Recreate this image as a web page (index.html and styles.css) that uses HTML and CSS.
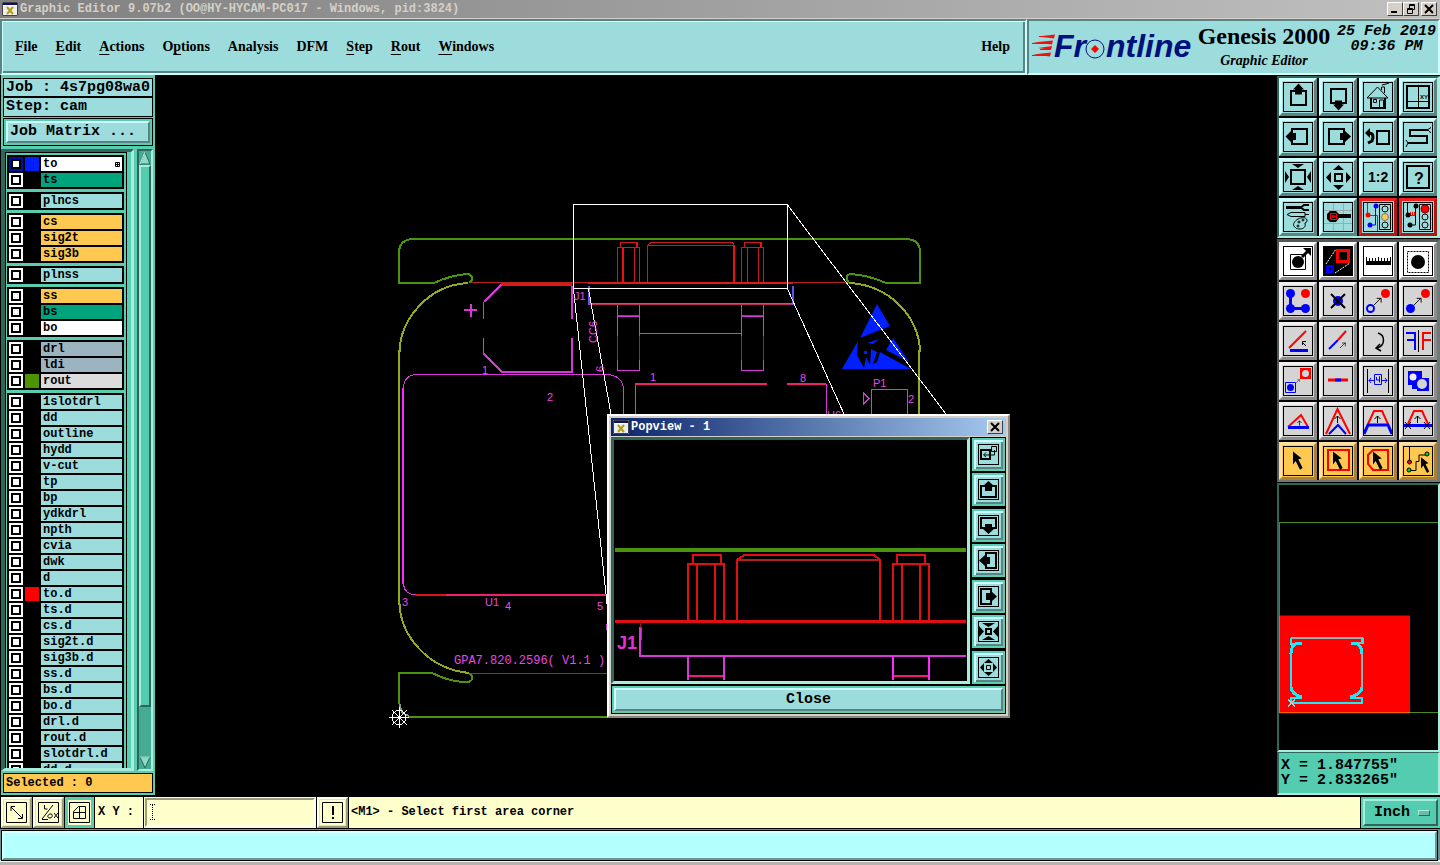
FILE: index.html
```
<!DOCTYPE html>
<html lang="en">
<head>
<meta charset="utf-8">
<title>Graphic Editor 9.07b2</title>
<link rel="stylesheet" href="styles.css">
</head>
<body>
<svg class="defs" aria-hidden="true">
<symbol id="xwin" viewBox="0 0 16 14"><path fill="#fff" d="M0 0h16v14H0z"/><path fill="#10106a" d="M1 1h14v2H1z"/><path fill="#eee" d="M1 4h14v9H1z"/><path stroke="#444" fill="none" d="M.5 .5h15v13H.5z"/><path stroke="#b0a010" stroke-width="2" d="M5 5l6 7M11 5l-6 7"/></symbol>
<symbol id="up" viewBox="1 1 28 28"><path class="k2" d="M8 9h15v14H8z"/><path d="M10 7.500l5.500-6 5.500 6-2 0v5h-7v-5z"/></symbol>
<symbol id="down" viewBox="1 1 28 28"><path class="k2" d="M8 7h15v14H8z"/><path d="M10 22.500l5.500 6 5.500-6-2 0v-4h-7v4z"/></symbol>
<symbol id="left" viewBox="1 1 28 28"><path class="k2" d="M9 7h15v15H9z"/><path d="M8 9l-5.500 5.500 5.500 5.500v-2h5v-7h-5z"/></symbol>
<symbol id="right" viewBox="1 1 28 28"><path class="k2" d="M6 7h15v15H6z"/><path d="M22 9l6 5.500-6 5.500v-2h-5v-7h5z"/></symbol>
<symbol id="in" viewBox="1 1 28 28"><path class="k2" d="M8 8h14v14H8z"/><path d="M9 2h12l-6 4zM9 28h12l-6-4zM2 9v12l4-6zM28 9v12l-4-6z"/></symbol>
<symbol id="out" viewBox="1 1 28 28"><path class="k2" d="M12 12h7v7h-7z"/><path d="M10 8h11l-5.500-5zM10 23h11l-5.500 5zM8 10v11l-5-5.500zM23 10v11l5-5.500z"/></symbol>
<symbol id="home" viewBox="1 1 28 28"><path class="k2" d="M8 16v10h14V16"/><path class="k1" d="M4 16L14.500 5 25 16zM18.500 8V5h3v6M19 3l4-1 3-1M10.500 17.500h3v3h-3zM16.500 26v-8h4v8"/></symbol>
<symbol id="back" viewBox="1 1 28 28"><path class="k2" d="M14 9h12v13H14z"/><path class="k3" d="M6 11c4 0 5 3 3 8l-4 2"/><path d="M2 11l5-5v10z"/></symbol>
<symbol id="serp" viewBox="1 1 28 28"><path class="k2" d="M25 8H7v6h17v7H5"/><path class="k1" d="M25 7.500l3-2M25 8l3 3M5 21l-2-3M5 21l-2 4"/></symbol>
<symbol id="tools" viewBox="1 1 28 28"><path class="k3" d="M3 5.500h16"/><path class="k2" d="M26 3h-5l-3 2.500 3 2.500h5"/><path class="k1" d="M4 12.500l4-2h14v4H8zM22 12.500h4M12 25c-3-1-1-6 3-8s8-2 9 1-3 2-2 4-1 5-5 5-4-1-5-2z"/><circle class="k1" cx="16" cy="20" r="1"/><circle class="k1" cx="20" cy="18" r="1"/><circle class="k1" cx="15" cy="24" r="1"/></symbol>
<symbol id="net" viewBox="1 1 28 28"><path stroke="#9aabab" fill="none" d="M10.500 1v28M20.500 1v28M1 8.500h28M1 21.500h28"/><path d="M7 9h6l3 3h12v4H16l-3 4H7l-3-3v-5z"/><path stroke="#f00" fill="none" d="M7.500 11.500h6v6h-6zM9.500 13.500h2v2h-2z"/></symbol>
<symbol id="light1" viewBox="1 1 28 28"><path stroke="red" fill="none" d="M4.500 1v12.500h10V29"/><path stroke="#00f" fill="none" d="M12.500 4v19H7"/><circle cx="5" cy="13" r="2.500" fill="red"/><circle cx="13" cy="4" r="2.500" fill="#00f"/><circle cx="7" cy="23" r="2.500" fill="#00f"/><path class="k1" d="M16.500 2.500h11v25h-11z"/><circle class="k1" cx="22" cy="7" r="3"/><circle cx="22" cy="15" r="3.500" fill="#ffc850" stroke="#777"/><circle class="k1" cx="22" cy="23" r="3"/></symbol>
<symbol id="light2" viewBox="1 1 28 28"><path class="k1" d="M4.500 1v12.500M12.500 4v19H7"/><path stroke="red" stroke-width="1" fill="none" d="M7 13.500h5M7.500 10v4M9.500 10v4M11.500 10v4"/><circle cx="5" cy="13" r="2.500"/><circle cx="13" cy="4" r="2.500"/><circle cx="7" cy="23" r="2.500"/><path class="k1" d="M16.500 2.500h11v25h-11z"/><circle cx="22" cy="7" r="4" fill="red" stroke="#700"/><circle class="k1" cx="22" cy="15" r="3"/><circle class="k1" cx="22" cy="23" r="3"/></symbol>
<symbol id="arr" viewBox="0 0 16 22"><path d="M0 0l10 8-4 1 5 10-3 2-5-10-3 4z"/></symbol>
<symbol id="mv" viewBox="0 0 9 9"><path stroke="#000" fill="none" d="M0 9l8-8M3 1.500h5v5"/></symbol>
<symbol id="ua" viewBox="0 0 7 8"><path stroke="#000" fill="none" d="M3.500 8V1M.5 4l3-3 3 3"/></symbol>
</svg>

<header class="titlebar">
  <svg class="winicon"><use href="#xwin"/></svg>
  <span class="titletext">Graphic Editor 9.07b2 (OO@HY-HYCAM-PC017 - Windows, pid:3824)</span>
  <button class="wbtn" aria-label="Minimize"><svg viewBox="0 0 12 10"><path d="M2 7h6v2H2z"/></svg></button>
  <button class="wbtn" aria-label="Restore"><svg viewBox="0 0 12 10"><path class="k1" d="M4.500 4V.5h5v5H8M2.500 4.500h5v5h-5zM4 1.500h6M2 5.500h6"/></svg></button>
  <button class="wbtn last" aria-label="Close window"><svg viewBox="0 0 12 10"><path class="kx" d="M2 1l8 8M10 1L2 9"/></svg></button>
</header>

<div class="top">
  <nav class="menubar">
    <button><u>F</u>ile</button><button><u>E</u>dit</button><button><u>A</u>ctions</button><button>O<u>p</u>tions</button><button>Analysis</button><button>DFM</button><button><u>S</u>tep</button><button><u>R</u>out</button><button><u>W</u>indows</button><button class="help">Help</button>
  </nav>
  <div class="brand">
    <svg class="logo" viewBox="1031 30 161 34" role="img" aria-label="Frontline">
      <g fill="#f01010"><path d="M1038 36.500l17-2-1 4zM1033 42.500l20-2-1 4zM1038 48l14-2-1 4zM1033 54.500l18-2-1 4z"/></g>
      <g fill="none" stroke="#f01010"><path d="M1039 36.500h12M1032 43.500h14M1040 49.500h10M1032 55.500h14"/></g>
      <text class="logotext" x="1054" y="57">Fr</text><text class="logotext" x="1106" y="57">ntline</text>
      <circle cx="1095" cy="49" r="9" fill="#9cdcdc" stroke="#00107c"/><path fill="red" d="M1095 45l4 4-4 4-4-4z"/>
    </svg>
    <div class="product"><strong>Genesis 2000</strong><em>Graphic Editor</em></div>
    <div class="date">25 Feb 2019<br>09:36 PM</div>
  </div>
</div>

<main class="main">
  <aside class="side">
    <div class="info job">Job : 4s7pg08wa0</div>
    <div class="info step">Step: cam</div>
    <div class="matrix"><button>Job Matrix ...</button></div>
    <div class="lists">
      <div class="frame"><div class="layers">
        <div class="group">
          <label class="layer active"><input type="checkbox"><i class="blue"></i><span class="white">to<svg class="mark" viewBox="0 0 5 5"><path stroke="#000" stroke-width="1" fill="none" d="M.5 .5h4v4h-4zM2.500 0v5M0 2.500h5"/></svg></span></label>
          <label class="layer"><input type="checkbox"><i></i><span class="green">ts</span></label>
        </div>
        <div class="group"><label class="layer"><input type="checkbox"><i></i><span>plncs</span></label></div>
        <div class="group">
          <label class="layer"><input type="checkbox"><i></i><span class="orange">cs</span></label>
          <label class="layer"><input type="checkbox"><i></i><span class="orange">sig2t</span></label>
          <label class="layer"><input type="checkbox"><i></i><span class="orange">sig3b</span></label>
        </div>
        <div class="group"><label class="layer"><input type="checkbox"><i></i><span>plnss</span></label></div>
        <div class="group">
          <label class="layer"><input type="checkbox"><i></i><span class="orange">ss</span></label>
          <label class="layer"><input type="checkbox"><i></i><span class="green">bs</span></label>
          <label class="layer"><input type="checkbox"><i></i><span class="white">bo</span></label>
        </div>
        <div class="group">
          <label class="layer"><input type="checkbox"><i></i><span class="steel">drl</span></label>
          <label class="layer"><input type="checkbox"><i></i><span class="steel">ldi</span></label>
          <label class="layer"><input type="checkbox"><i class="olive"></i><span class="grey">rout</span></label>
        </div>
        <div class="group">
          <label class="layer"><input type="checkbox"><i></i><span>1slotdrl</span></label>
          <label class="layer"><input type="checkbox"><i></i><span>dd</span></label>
          <label class="layer"><input type="checkbox"><i></i><span>outline</span></label>
          <label class="layer"><input type="checkbox"><i></i><span>hydd</span></label>
          <label class="layer"><input type="checkbox"><i></i><span>v-cut</span></label>
          <label class="layer"><input type="checkbox"><i></i><span>tp</span></label>
          <label class="layer"><input type="checkbox"><i></i><span>bp</span></label>
          <label class="layer"><input type="checkbox"><i></i><span>ydkdrl</span></label>
          <label class="layer"><input type="checkbox"><i></i><span>npth</span></label>
          <label class="layer"><input type="checkbox"><i></i><span>cvia</span></label>
          <label class="layer"><input type="checkbox"><i></i><span>dwk</span></label>
          <label class="layer"><input type="checkbox"><i></i><span>d</span></label>
          <label class="layer"><input type="checkbox"><i class="red"></i><span>to.d</span></label>
          <label class="layer"><input type="checkbox"><i></i><span>ts.d</span></label>
          <label class="layer"><input type="checkbox"><i></i><span>cs.d</span></label>
          <label class="layer"><input type="checkbox"><i></i><span>sig2t.d</span></label>
          <label class="layer"><input type="checkbox"><i></i><span>sig3b.d</span></label>
          <label class="layer"><input type="checkbox"><i></i><span>ss.d</span></label>
          <label class="layer"><input type="checkbox"><i></i><span>bs.d</span></label>
          <label class="layer"><input type="checkbox"><i></i><span>bo.d</span></label>
          <label class="layer"><input type="checkbox"><i></i><span>drl.d</span></label>
          <label class="layer"><input type="checkbox"><i></i><span>rout.d</span></label>
          <label class="layer"><input type="checkbox"><i></i><span>slotdrl.d</span></label>
          <label class="layer"><input type="checkbox"><i></i><span>dd.d</span></label>
        </div>
      </div></div>
      <div class="scroll">
        <svg viewBox="0 0 12 14"><path fill="#8cdcc8" stroke="#30665a" d="M6 1l5 12H1z"/><path stroke="#b4f4e4" fill="none" d="M1 13L6 1"/></svg>
        <div class="thumb"></div><div class="trough"></div>
        <svg viewBox="0 0 12 14"><path fill="#8cdcc8" stroke="#30665a" d="M6 13L1 2h10z"/><path stroke="#b4f4e4" fill="none" d="M1 2h10"/></svg>
      </div>
    </div>
    <div class="selected">Selected : 0</div>
  </aside>

  <section class="canvas">
    <svg class="drawing" viewBox="155 75 1122 720">
      <g class="lines">
        <g stroke="#4a9410" stroke-width="2">
          <path d="M434 283H399V253Q399 239 414 239H905Q920 239 920 252V283H886"/>
          <path d="M434 283Q451 275 468 274Q473 275 472 280L469 283M886 283Q868 275 850 274Q846 275 847 280L849 283"/>
          <path d="M432 673H399V704M432 673Q450 682 466 682Q472 682 472 678Q472 674 468 673M408 717H912"/>
        </g>
        <path stroke="#8a9a80" stroke-width="2" d="M400 704Q400 714 409 716"/>
        <g stroke="#96a81e" stroke-width="2">
          <path d="M399 350V605M919 350V700"/>
          <path d="M399.500 352C400 320 428 285 468 283M920 352C919 316 889 285 849 283M399.500 604C401 636 428 669 469 673"/>
        </g>
        <path stroke="#b82020" d="M471 282.500H848M470 673.500H607"/>
        <path stroke="#e01818" stroke-width="3" d="M501 284.500H572"/>
        <path stroke="#e01818" stroke-width="2" d="M588 283H793"/>
        <g stroke="#c81c1c">
          <path d="M617.500 282V247.500H639.500V282M622.500 247V282M634.500 247V282M620.500 247V242.500H637.500V247M647.500 282V245.500H734.500V282M648 245L651 242.500H732L735 246M741.500 282V247.500H763.500V282M747.500 247V282M758.500 247V282M744.500 247V242.500H761.500V247"/>
          <path stroke="#f01010" stroke-width="2" d="M623 248V282M637 242V248M734 246V282M761 242V248"/>
        </g>
        <g stroke="#d838d8">
          <path stroke-width="2" d="M501 285L484 302M484 354L502 372H572V338M572 286V319"/>
          <path d="M483.500 302V319M483.500 338V355"/>
          <path stroke-width="2" d="M464 310H477M470.500 304V317"/>
          <path d="M403.500 388Q404 374.500 418 374.500H606Q623 375 623.500 390V420M635.500 384V420M826.500 384V420M871.500 420V389.500H907.500V420"/>
          <path d="M403.500 584Q404 594 416 595"/>
          <path stroke="#ff28ff" stroke-width="2" d="M403 388V584"/>
          <path d="M617.500 304V370.500H639.500V304M741.500 304V370.500H763.500V304M639.500 333.500H741.500M863.500 393V404L869 398.500Z"/>
          <path d="M590 303.500H793M617 316.500H640M741 316.500H764"/>
          <path stroke-width="2" d="M607 624V630"/>
        </g>
        <g stroke="#f02070"><path stroke-width="2" d="M446 595H607M635 384H767M787 384H826"/></g>
        <path stroke="#c02858" d="M590 304.500H793M618 315.500H639M742 315.500H763"/>
        <path stroke="#d81414" stroke-width="2" d="M416 595H446"/>
        <path stroke="#a82030" d="M617.500 336V360M639.500 336V360M741.500 336V360M763.500 336V360"/>
        <path stroke="#6050ff" stroke-width="2" d="M589 286V305M793 286V305"/>
      </g>
      <g fill="#0020ff">
        <path d="M877 304L890 326 875 332 860 338zM893 338L909 362 886 350zM858 341L842 369H911L880 352 877 362 873 364 877 352 871 349 870 365 866 357 864 368 857 355z"/>
        <path d="M864 351h3v3h-3zM867 343l12-4-6 5z"/>
      </g>
      <g class="lines" stroke="#fff">
        <path d="M573.500 204.500H787.500V288.500H573.500Z"/>
        <path d="M573.500 289L613 660M588.500 289L611 414M787.500 289L844 414M787.500 205L946 414"/>
        <circle cx="399" cy="717.500" r="7"/><path d="M389 717.500H409M399.500 707V728M392 710L407 725M407 710L392 725"/>
      </g>
      <g class="silk">
        <text x="574" y="300">J1</text><text transform="translate(597 343) rotate(-90)">CC6</text><text transform="translate(604 372) rotate(-90)">6</text>
        <text x="482" y="374">1</text><text x="547" y="401">2</text><text x="650" y="381">1</text><text x="800" y="382">8</text>
        <text x="827" y="419">U6</text><text x="873" y="387">P1</text><text x="908" y="403">2</text>
        <text x="402" y="606">3</text><text x="485" y="606">U1</text><text x="505" y="610">4</text><text x="597" y="610">5</text>
        <text class="rev" x="454" y="664">GPA7.820.2596( V1.1 )</text>
      </g>
    </svg>

    <section class="popup">
      <header class="poptitle"><svg class="winicon"><use href="#xwin"/></svg><span>Popview - 1</span><button class="wbtn last" aria-label="Close popview"><svg viewBox="0 0 12 10"><path class="kx" d="M2 1l8 8M10 1L2 9"/></svg></button></header>
      <div class="popbody">
        <div class="popview"><svg viewBox="614 440 353 241">
          <g class="lines">
            <path stroke="#4a9410" stroke-width="4" d="M615 550H966"/>
            <path stroke="#e01010" stroke-width="2" d="M688 620V564H724V620M697 564V620M715 564V620M693 564V555H721V564M737 620V560L744 555H874L880 560V620M893 620V564H929V620M902 564V620M920 564V620M897 564V555H925V564"/>
            <path stroke="#b02020" stroke-width="2" d="M738 560H880"/>
            <path stroke="#e01010" stroke-width="3" d="M615 621.500H966"/>
            <path stroke="#d838d8" stroke-width="2" d="M640 627V656H966M688 656V680M724 656V680"/>
            <path stroke="#ff28ff" stroke-width="2" d="M893 656V680M929 656V680"/>
            <path stroke="#6040ff" d="M641.500 627V640"/><path stroke="#a01818" d="M640.500 622V628"/>
            <path stroke="#f01880" stroke-width="2" d="M689 676H723M894 676H928"/>
          </g>
          <text class="j1" x="617" y="649">J1</text>
        </svg></div>
        <div class="poptools">
          <button aria-label="Pop view"><svg viewBox="0 0 19 19"><path class="k2" d="M2 5h9v9H2z"/><path class="k1" d="M12.500 1.500h5v5h-5zM15.500 5v5H5M7 7.500L4.500 10 7 12"/></svg></button>
          <button aria-label="Pan up"><svg viewBox="0 0 19 19"><path class="k2" d="M7 6H2v11h15V6h-5"/><path d="M4 6l5.500-5L15 6h-2v5H6V6z"/></svg></button>
          <button aria-label="Pan down"><svg viewBox="0 0 19 19"><path class="k2" d="M7 12H2V2h15v10h-5"/><path d="M4 13l5.500 5 5.500-5h-2V8H6v5z"/></svg></button>
          <button aria-label="Pan left"><svg viewBox="0 0 19 19"><path class="k2" d="M7 7V2h10v15H7v-5"/><path d="M6 4L0 9.500 6 15v-2h5V6H6z"/></svg></button>
          <button aria-label="Pan right"><svg viewBox="0 0 19 19"><path class="k2" d="M12 7V2H2v15h10v-5"/><path d="M12 4l6 5.500-6 5.500v-2H7V6h5z"/></svg></button>
          <button aria-label="Zoom in"><svg viewBox="0 0 19 19"><path class="k2" d="M7 7h5v5H7z"/><path d="M3 1h13l-6.500 4zM3 18h13l-6.500-4zM0 4v11l5-5.500zM19 4v11l-5-5.500z"/></svg></button>
          <button aria-label="Zoom out"><svg viewBox="0 0 19 19"><path class="k1" d="M7.500 7.500h4v4h-4z"/><path d="M5 5h9L9.500 1zM5 14h9l-4.500 4zM5 5v9L1 9.500zM14 5v9l4-4.500z"/></svg></button>
        </div>
      </div>
      <div class="popfoot"><button>Close</button></div>
    </section>
  </section>

  <aside class="right">
    <div class="tools">
      <button aria-label="Pan up"><svg><use href="#up"/></svg></button>
      <button aria-label="Pan down"><svg><use href="#down"/></svg></button>
      <button aria-label="Home"><svg><use href="#home"/></svg></button>
      <button aria-label="Zoom XY"><svg viewBox="1 1 28 28"><path class="k2" d="M4 4h22v22H4z"/><path class="k1" d="M15.500 4v22M4 19.500h22"/><text x="17" y="17" font-size="6">XY</text></svg></button>
      <button aria-label="Pan left"><svg><use href="#left"/></svg></button>
      <button aria-label="Pan right"><svg><use href="#right"/></svg></button>
      <button aria-label="Previous view"><svg><use href="#back"/></svg></button>
      <button aria-label="Serpentine"><svg><use href="#serp"/></svg></button>
      <button aria-label="Zoom in"><svg><use href="#in"/></svg></button>
      <button aria-label="Zoom out"><svg><use href="#out"/></svg></button>
      <button aria-label="Scale"><svg viewBox="1 1 28 28"><text x="5" y="20" font-size="14" font-weight="bold">1:2</text></svg></button>
      <button aria-label="Query"><svg viewBox="1 1 28 28"><path class="k2" d="M4 4h22v22H4z"/><text x="11" y="22" font-size="16">?</text></svg></button>
      <button aria-label="Setup"><svg><use href="#tools"/></svg></button>
      <button aria-label="Grid snap"><svg><use href="#net"/></svg></button>
      <button class="hot" aria-label="Netlist check"><svg><use href="#light1"/></svg></button>
      <button class="hot" aria-label="Design check"><svg><use href="#light2"/></svg></button>
    </div>
    <div class="tools edit">
      <button class="on" aria-label="Feature select"><svg viewBox="1 1 28 28"><path class="k1" d="M7.500 8.500h15v15h-15z"/><circle cx="15" cy="16" r="6"/><path class="k3" d="M19 11l6-6"/><path d="M20 2h8v8z"/></svg></button>
      <button class="on" aria-label="Popview"><svg viewBox="1 1 28 28"><path d="M1 1h28v28H1z"/><path stroke="red" stroke-width="3" fill="none" d="M14.500 4.500h11v11h-11z"/><path stroke="#00f" stroke-width="3" fill="none" d="M4.500 20.500h5v5h-5z"/><path stroke="#fff" stroke-dasharray="2 1" fill="none" d="M3 18L13 3M12 27l15-10"/></svg></button>
      <button class="on" aria-label="Measure"><svg viewBox="1 1 28 28"><path d="M3 15h25v4H3z"/><path class="k1" d="M3.500 11v5M6.500 12v4M9.500 12v4M12.500 12v4M15.500 11v5M18.500 12v4M21.500 12v4M24.500 12v4M27.500 11v5"/></svg></button>
      <button class="on" aria-label="Area select"><svg viewBox="1 1 28 28"><path class="k1" stroke-dasharray="2 1" d="M4.500 5.500h21v21h-21z"/><circle cx="15" cy="16" r="7"/></svg></button>
      <button aria-label="Add nodes"><svg viewBox="1 1 28 28"><g fill="#00f"><circle cx="7.500" cy="7.500" r="4.500"/><circle cx="7.500" cy="22.500" r="4.500"/><circle cx="22.500" cy="22.500" r="4.500"/></g><circle cx="22.500" cy="7.500" r="4.500" fill="red"/><path stroke="#00f" stroke-width="3" fill="none" d="M7.500 7.500v15h15"/></svg></button>
      <button aria-label="Delete"><svg viewBox="1 1 28 28"><circle cx="15" cy="15" r="5" fill="#00f"/><path class="k2" d="M8 8l14 14M22 8L8 22"/></svg></button>
      <button aria-label="Move"><svg viewBox="1 1 28 28"><circle cx="7.500" cy="22.500" r="3.500" fill="none" stroke="#00f" stroke-width="2"/><circle cx="22.500" cy="7.500" r="4.500" fill="red"/><use href="#mv" x="11" y="11" width="8" height="8"/></svg></button>
      <button aria-label="Copy"><svg viewBox="1 1 28 28"><circle cx="7.500" cy="22.500" r="4.500" fill="#00f"/><circle cx="22.500" cy="7.500" r="4.500" fill="red"/><use href="#mv" x="11" y="11" width="8" height="8"/></svg></button>
      <button aria-label="Rotate"><svg viewBox="1 1 28 28"><path stroke="red" stroke-width="2" d="M6 22L23 5"/><path stroke="#00f" stroke-width="3" d="M7 24.500h18"/><path class="k1" d="M23 20l-4-4M19.500 19v-3.500h3.500"/></svg></button>
      <button aria-label="Stretch"><svg viewBox="1 1 28 28"><path stroke="#00f" stroke-width="2" d="M6 23l9-9"/><path stroke="red" stroke-width="2" d="M15 14l8-9"/><use href="#mv" x="17" y="16" width="6" height="6"/></svg></button>
      <button aria-label="Undo"><svg viewBox="1 1 28 28"><path stroke="#000" stroke-width="1.500" fill="none" d="M15 7c7 2 8 12-1 15M17 18l-4 4 5 3"/></svg></button>
      <button aria-label="Mirror"><svg viewBox="1 1 28 28"><path stroke="#00f" stroke-width="2" fill="none" d="M3 7h9v17M4 14h8"/><path class="k1" d="M15.500 4v22"/><path stroke="red" stroke-width="2" fill="none" d="M28 7h-8v17M20 14h8"/></svg></button>
      <button aria-label="Substitute"><svg viewBox="1 1 28 28"><path fill="red" d="M17 2h11v11H17z"/><circle cx="22.500" cy="7.500" r="3.500" fill="#d4d4d4"/><path stroke="#00f" fill="none" d="M2.500 16.500h10v10h-10z"/><circle cx="7.500" cy="21.500" r="3.500" fill="#00f"/><use href="#mv" x="13" y="13" width="4" height="4"/></svg></button>
      <button aria-label="Break line"><svg viewBox="1 1 28 28"><path stroke="red" stroke-width="3" d="M5 14h20"/><path stroke="#00f" stroke-width="3" d="M12 14h6"/></svg></button>
      <button aria-label="Spacing"><svg viewBox="1 1 28 28"><path class="k1" d="M4.500 3v24M25.500 3v24"/><path stroke="#00f" fill="none" d="M11.500 8.500h7v10h-7zM6 14.500h5M19 14.500h5M8 12l-2 2.500 2 2.500M22 12l2 2.500-2 2.500M13.500 11v3h3v-3.500v6"/></svg></button>
      <button aria-label="Boolean"><svg viewBox="1 1 28 28"><path fill="#00f" d="M5 5h14v14H5zM14 12h12v13H14zM9 19h6v4H9z"/><circle cx="10" cy="11" r="3.500" fill="#eee"/><circle cx="19" cy="18" r="5" fill="#d4d4d4"/></svg></button>
      <button aria-label="Triangle"><svg viewBox="1 1 28 28"><path stroke="red" stroke-width="2" fill="none" d="M5 21L18 9l7 12"/><path stroke="#00f" stroke-width="3" d="M5 21.500h21"/><use href="#ua" x="14" y="14" width="5" height="6"/></svg></button>
      <button aria-label="Peak"><svg viewBox="1 1 28 28"><path stroke="red" stroke-width="2" fill="none" d="M3 28L14.500 3 27 28"/><path stroke="#00f" stroke-width="2" fill="none" d="M6 28l9-9 8 9"/><use href="#ua" x="11" y="9" width="7" height="8"/></svg></button>
      <button aria-label="Trapezoid"><svg viewBox="1 1 28 28"><path stroke="red" stroke-width="2" fill="none" d="M5 18l6-13h8l6 13"/><path stroke="#00f" stroke-width="3" fill="none" d="M1 28l4-9h20l4 9"/><use href="#ua" x="11" y="9" width="7" height="8"/></svg></button>
      <button aria-label="Trim"><svg viewBox="1 1 28 28"><path stroke="red" stroke-width="2" fill="none" d="M5 18l6-13h8l6 13"/><path stroke="#00f" stroke-width="3" d="M1 19.500h28"/><path class="k1" d="M2 16l6 7M8 16l-6 7M21 16l6 7M27 16l-6 7"/><use href="#ua" x="11" y="9" width="7" height="8"/></svg></button>
      <button class="sel" aria-label="Select"><svg viewBox="1 1 28 28"><use href="#arr" x="10" y="5" width="14" height="20"/></svg></button>
      <button class="sel" aria-label="Select in box"><svg viewBox="1 1 28 28"><path stroke="red" stroke-width="2" fill="none" d="M5 4h21v20H5z"/><use href="#arr" x="10" y="5" width="14" height="20"/></svg></button>
      <button class="sel" aria-label="Select in polygon"><svg viewBox="1 1 28 28"><path stroke="red" stroke-width="2" fill="none" d="M10 4h15v20H10l-5-6V9z"/><use href="#arr" x="10" y="5" width="14" height="20"/></svg></button>
      <button class="sel" aria-label="Select net"><svg viewBox="1 1 28 28"><path class="k1" d="M6.500 1v15M6 24.500h7v-9h3V9h7"/><circle cx="6.500" cy="16" r="2" fill="red" stroke="#000"/><circle cx="6" cy="24" r="2" fill="#0d0" stroke="#000"/><circle cx="24" cy="8" r="2" fill="#0d0" stroke="#000"/><use href="#arr" x="18" y="11" width="12" height="17"/></svg></button>
    </div>
    <div class="preview"><svg viewBox="1279 486 159 264">
      <path fill="#f00" d="M1279 616h131v98h-131z"/>
      <g class="lines"><path stroke="#4a8a20" d="M1279 522.500h159M1279.500 522v94M1410 712.500h28"/><path stroke="#f06010" d="M1279.500 616v96.500H1410"/>
      <path stroke="#98b0b8" stroke-width="2" d="M1291 638H1362V643H1356M1362 654V688"/>
      <path stroke="#20e8f8" stroke-width="2" d="M1291 638V644H1296M1291 654V688M1302 698H1291V703H1362V698H1350M1363 638V644"/>
      <path stroke="#20e8f8" stroke-width="3" d="M1302 643.500h-4Q1291 645 1291 654M1291 688Q1292 695 1302 697.500M1351 643.500h4Q1362 646 1362 654M1362 688Q1361 695 1350 697.500"/>
      <path stroke="#b0d0d0" d="M1288 700l7 7M1295 700l-7 7"/></g>
    </svg></div>
    <div class="coords"><span>X = 1.847755"</span><span>Y = 2.833265"</span></div>
  </aside>
</main>

<div class="command">
  <button class="cbtn" aria-label="Absolute"><svg viewBox="0 0 21 21"><path class="k1" d="M.5 .5h20v20H.5zM5 5l11 11M5 9V4.500h4M12 16.500h4.500V12"/></svg></button>
  <button class="cbtn" aria-label="Angle"><svg viewBox="0 0 21 21"><path class="k1" d="M.5 .5h20v20H.5zM4 17L15 3M4 17.500h6M6.500 3v4h3M12 12c3-1 3 4 0 4s-3-3 0-4M16 11l4 5M20 11l-4 5"/></svg></button>
  <button class="cbtn teal" aria-label="Grid"><svg viewBox="0 0 21 21"><path class="k1" d="M.5 .5h20v20H.5zM4.500 9.500l5-5h7v12h-12zM10.500 4v13M4 10.500h13"/></svg></button>
  <label class="xylabel" for="xy">X Y :</label>
  <div class="xybox"><input id="xy" type="text"><svg viewBox="0 0 5 20"><path class="k1" stroke-dasharray="1 1" d="M2.500 3v14M0 2.500h5M0 17.500h5"/></svg></div>
  <button class="cbtn" aria-label="Alert"><svg viewBox="0 0 21 21"><path class="k1" d="M.5 .5h20v20H.5z"/><path d="M10 4h2v9h-2zM10 15h2v2h-2z"/></svg></button>
  <output class="message">&lt;M1&gt; - Select first area corner</output>
  <div class="units"><button>Inch<i></i></button></div>
</div>
<footer class="status"><div></div></footer>
</body>
</html>
```
FILE: styles.css
```
* { box-sizing: border-box; }
:root {
  --cyan: #9cdcdc; --teal: #5accb0; --dark: #30665a; --lite: #a8ecdc;
  --hi: #ccffff; --lo: #5a8484; --cream: #ffffcc; --orange: #ffc850;
  --mono: "Liberation Mono", "Courier New", monospace;
}
body { margin: 0; height: 100vh; display: flex; flex-direction: column; overflow: hidden; background: #000; color: #000; font: bold 12px/14px var(--mono); }
button { font: inherit; color: inherit; margin: 0; padding: 0; border: 0; background: none; display: block; }
svg { display: block; }
svg text { font-family: "Liberation Sans", Arial, sans-serif; }
.defs { position: absolute; width: 0; height: 0; }
.k1, .k2, .k3, .kx { fill: none; stroke: #000; stroke-width: 1px; }
.k2 { stroke-width: 2px; }
.kx { stroke-width: 2px; }
.k3 { stroke-width: 3px; }

.titlebar { display: flex; align-items: center; height: 19px; padding: 0 3px 1px 2px; background: linear-gradient(90deg, #808080, #c0c0c0); border-bottom: 1px solid #d4d0c8; color: #d4d0c8; white-space: pre; }
.winicon { width: 16px; height: 14px; flex: none; margin-right: 2px; }
.titletext { flex: 1; }
.wbtn { width: 16px; height: 14px; background: #d4d0c8; border: 1px solid; border-color: #fff #404040 #404040 #fff; display: flex; justify-content: center; align-items: center; }
.wbtn svg { width: 12px; height: 10px; }
.wbtn.last { margin-left: 2px; }

.top { display: flex; height: 56px; flex: none; }
.menubar, .brand { border: 2px solid; border-color: var(--lo) var(--hi) var(--hi) var(--lo); background: var(--cyan); display: flex; align-items: center; }
.menubar { flex: 1; gap: 18px; padding: 0 15px 0 13px; font: bold 14px/18px "Liberation Serif", "Times New Roman", serif; box-shadow: inset 1px 1px var(--hi), inset -2px -2px var(--lo); }
.menubar u { text-underline-offset: 3px; }
.menubar .help { margin-left: auto; }
.brand { width: 413px; padding: 0 1px 0 2px; align-items: flex-start; }
.logo { width: 161px; height: 34px; margin-top: 9px; }
.logotext { font: italic bold 32px "Liberation Sans", Arial, sans-serif; fill: #00107c; }
.product { width: 144px; display: flex; flex-direction: column; align-items: center; font: bold 24px/30px "Liberation Serif", "Times New Roman", serif; }
.product em { font-size: 14px; line-height: 20px; }
.date { flex: 1; font: italic bold 15px/15px var(--mono); text-align: center; margin-top: 3px; white-space: nowrap; }

.main { display: flex; flex: 1; min-height: 0; }
.side { width: 155px; border-left: 1px solid #000; background: var(--teal); padding: 3px 2px 2px 0; display: flex; flex-direction: column; }
.info, .matrix, .selected { margin-left: 2px; border: 1px solid #000; background: var(--cyan); flex: none; white-space: pre; }
.info { height: 19px; padding-left: 2px; font-size: 15px; line-height: 17px; }
.info.step { height: 20px; }
.matrix { margin-top: 1px; height: 28px; padding: 2px; background: var(--teal); }
.matrix button { width: 100%; height: 22px; padding-left: 2px; text-align: left; font-size: 15px; line-height: 18px; background: var(--cyan); border: 2px solid; border-color: var(--hi) var(--lo) var(--lo) var(--hi); }
.lists { display: flex; flex: 1; min-height: 0; margin-top: 3px; gap: 3px; }
.frame { width: 134px; border: solid; border-width: 3px 3px 3px 4px; border-color: var(--dark) var(--lite) var(--lite) var(--dark); padding-right: 4px; display: flex; }
.layers { flex: 1; min-height: 0; overflow: hidden; border: 1px solid #000; border-bottom: 0; padding: 2px 2px 0 1px; }
.group { background: #000; padding: 2px; margin-bottom: 3px; display: grid; gap: 2px; }
.layer { display: grid; grid-template-columns: 14px 14px 1fr; gap: 2px; height: 14px; }
.layer input { appearance: none; margin: 2px; width: 10px; height: 10px; background: #fff; border: 2px solid #000; outline: 2px solid #fff; }
.layer.active input { outline-color: #0010a0; }
.layer span { background: var(--cyan); padding-left: 2px; display: flex; justify-content: space-between; align-items: center; line-height: 14px; }
.layer .white { background: #fff; }
.layer .green { background: #00a47c; }
.layer .orange { background: var(--orange); }
.layer .steel { background: #9cb4c0; }
.layer .grey { background: #dcdcdc; }
.blue { background: #0020ff; }
.olive { background: #4a9400; }
.red { background: #f00; }
.mark { width: 5px; height: 5px; margin-right: 2px; }
.scroll { flex: 1; border: 2px solid; border-color: var(--dark) var(--lite) var(--lite) var(--dark); background: #44ac94; display: flex; flex-direction: column; }
.scroll svg { width: 12px; height: 14px; }
.thumb { flex: 540; background: #54ccb0; border: 2px solid; border-color: var(--lite) var(--dark) var(--dark) var(--lite); }
.trough { flex: 48; }
.selected { height: 20px; margin-top: 2px; padding-left: 2px; line-height: 18px; background: var(--orange); }

.canvas { flex: 1; position: relative; background: #000; min-width: 0; }
.drawing { width: 100%; height: 100%; }
.lines { fill: none; shape-rendering: crispEdges; }
.silk text { font-size: 11px; font-weight: normal; fill: #e848e8; }
.silk .rev { font-family: var(--mono); font-size: 12px; white-space: pre; }
.j1 { font-size: 18px; font-weight: bold; fill: #e830d0; }

.popup { position: absolute; left: 452px; top: 339px; width: 403px; background: #000; border: 2px solid; border-color: #fff #8c8880 #8c8880 #fff; box-shadow: inset 0 0 0 2px #d4d0c8; padding: 2px; }
.poptitle { display: flex; align-items: center; height: 19px; padding: 0 3px 0 2px; background: linear-gradient(90deg, #0a246a, #a6caf0); color: #fff; border-bottom: 1px solid #d4d0c8; white-space: pre; }
.poptitle span { flex: 1; }
.popbody { display: flex; gap: 2px; padding: 0 1px 0 0; }
.popview { flex: 1; border: 3px solid; border-color: var(--dark) var(--lite) var(--lite) var(--dark); }
.popview svg { width: 100%; }
.poptools { display: grid; gap: 2px; padding: 1px 0 0; }
.poptools button { width: 33px; height: 33px; padding: 2px; border: 2px solid var(--teal); background: var(--cyan); display: grid; place-items: center; box-shadow: inset 2px 2px var(--hi), inset -2px -2px var(--lo); }
.poptools svg { width: 21px; height: 21px; border: 1px solid #000; }
.popfoot { margin-top: 1px; padding: 2px; border: 1px solid #000; background: var(--teal); }
.popfoot button { width: 100%; height: 23px; font-size: 15px; line-height: 19px; background: var(--cyan); border: 2px solid; border-color: var(--hi) var(--lo) var(--lo) var(--hi); }

.right { width: 163px; display: flex; flex-direction: column; }
.tools { display: grid; grid-template-columns: repeat(4, 38px); gap: 2px; margin-top: 1px; border: solid; border-width: 2px 3px 2px 2px; border-color: var(--dark) var(--lite) var(--lite) var(--dark); }
.tools button { height: 38px; padding: 1px; border: 3px solid; border-color: var(--hi) var(--lo) var(--lo) var(--hi); background: var(--cyan); }
.tools svg { width: 30px; height: 30px; border: 1px solid #000; }
.tools .hot { border-color: #f02020 #b01818 #b01818 #f02020; }
.tools.edit { border-top-width: 3px; border-color: #505858 #707878 #707878 #505858; }
.edit button { background: #d4d4d4; border-color: #f0f0f0 #8c8c8c #8c8c8c #f0f0f0; }
.edit .on { background: #fff; border-color: #fff #8c8c8c #8c8c8c #fff; }
.edit .sel { background: var(--orange); border-color: #ffe0a0 #a88038 #a88038 #ffe0a0; }
.preview { flex: 1; min-height: 0; margin-top: 1px; border: 2px solid; border-color: var(--dark) var(--lite) var(--lite) var(--dark); }
.preview svg { width: 100%; height: 100%; }
.coords { height: 43px; padding: 5px 2px; border: solid; border-width: 1px 2px 2px; border-color: var(--dark) var(--lite) var(--lite) var(--dark); background: #54ccb0; display: flex; flex-direction: column; font-size: 15px; line-height: 15px; white-space: pre; }

.command { flex: none; height: 34px; padding: 2px 0 1px 1px; display: flex; gap: 1px; background: #000; }
.cbtn { width: 31px; height: 31px; flex: none; background: var(--cream); border: 2px solid; border-color: #fffff0 #9c9c7c #9c9c7c #fffff0; box-shadow: inset 0 0 0 1px #e4e4b4; display: grid; place-items: center; }
.cbtn svg { width: 21px; height: 21px; }
.cbtn.teal { width: 29px; border: 3px solid var(--teal); box-shadow: none; }
.xylabel { width: 48px; flex: none; padding-left: 3px; background: var(--cream); line-height: 30px; }
.xybox { width: 172px; flex: none; position: relative; background: var(--cream); border: 1px solid var(--cream); }
.xybox input { width: 100%; height: 100%; background: var(--cream); border: 2px solid; border-color: #9c9c7c #fffff0 #fffff0 #9c9c7c; font: inherit; }
.xybox svg { position: absolute; left: 5px; top: 4px; width: 5px; height: 20px; }
.message { flex: 1; padding-left: 2px; background: var(--cream); line-height: 30px; white-space: pre; }
.units { width: 79px; flex: none; padding: 2px; background: var(--teal); }
.units button { width: 100%; height: 27px; display: flex; align-items: center; justify-content: space-between; padding: 0 6px 0 9px; font-size: 15px; background: #54ccb0; border: 2px solid; border-color: var(--lite) var(--dark) var(--dark) var(--lite); }
.units i { width: 12px; height: 6px; border: 1px solid; border-color: var(--lite) var(--dark) var(--dark) var(--lite); background: #68bca8; }
.status { flex: none; height: 36px; padding: 1px; background: #6a9090; border-bottom: 3px solid #b8b4b0; box-shadow: inset 0 -2px #d8ffff; }
.status div { height: 29px; background: #b4ffff; border: solid; border-width: 2px; border-color: #d8ffff #6a9898 #6a9898 #d8ffff; outline: 1px solid #000; margin: 1px 2px 0 1px; }
```
